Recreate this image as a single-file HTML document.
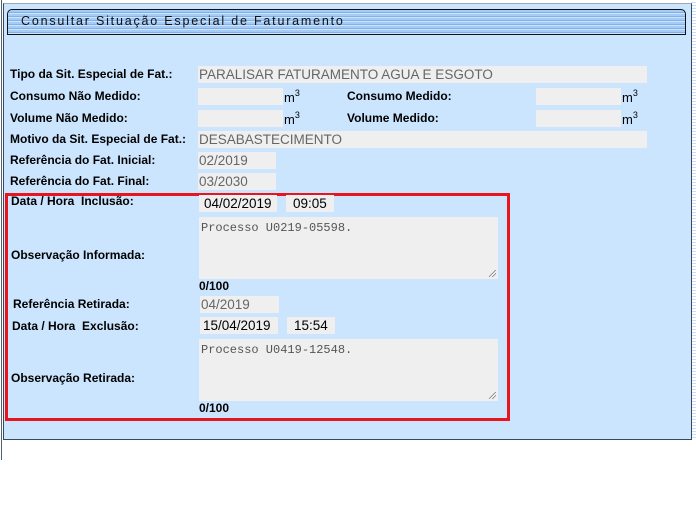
<!DOCTYPE html>
<html><head><meta charset="utf-8"><style>
*{margin:0;padding:0;box-sizing:border-box}
body{width:696px;height:523px;background:#fff;position:relative;overflow:hidden;font-family:"Liberation Sans",Arial,sans-serif}
.stripes{position:absolute;left:691px;top:0;width:5px;height:440px;background:repeating-linear-gradient(#fff 0 2px,#c9defa 2px 3px)}
.edge{position:absolute;left:1px;top:0;width:1px;height:460px;background:#506070}
.panel{position:absolute;left:3px;top:3px;width:689px;height:437px;background:#cce5fe;border:1px solid #3a4a5a;border-top-color:#9ab}
.title{position:absolute;left:7px;top:9px;width:679px;height:26px;border:1px solid #111;border-radius:5px 5px 0 0;background:repeating-linear-gradient(#a6ccf5 0 2px,#7fb2ec 2px 3px,#cfe3fa 3px 4px)}
.title span{position:absolute;left:13px;top:4px;font-size:12.5px;letter-spacing:1.8px;color:#111}
.l{position:absolute;font-size:12px;font-weight:bold;color:#000;white-space:nowrap}
.b{position:absolute;background:#efefef;height:17px;font-size:13.5px;color:#666;padding-left:1px;line-height:17px;white-space:nowrap}
.k{color:#000}
.m{position:absolute;font-size:13px;color:#000}
.m sup{font-size:9px;vertical-align:6px}
.ta{position:absolute;background:#efefef;width:299px;height:62px;font-family:"Liberation Mono",monospace;font-size:12px;color:#555;padding:4px 2px}
.ta:after{content:"";position:absolute;right:2px;bottom:2px;width:7px;height:7px;background:linear-gradient(135deg,transparent 45%,#777 45% 52%,transparent 52% 70%,#777 70% 77%,transparent 77%)}
.red{position:absolute;left:5px;top:193px;width:505px;height:228px;border:3px solid #e8141e}
</style></head><body>
<div class="stripes"></div>
<div class="panel"></div>
<div class="edge"></div>
<div class="title"><span>Consultar Situação Especial de Faturamento</span></div>

<div class="l" style="left:10px;top:67px">Tipo da Sit. Especial de Fat.:</div>
<div class="b" style="left:198px;top:66px;width:449px">PARALISAR FATURAMENTO AGUA E ESGOTO</div>

<div class="l" style="left:10px;top:89px">Consumo Não Medido:</div>
<div class="b" style="left:198px;top:88px;width:85px"></div>
<div class="m" style="left:284px;top:88px">m<sup>3</sup></div>
<div class="l" style="left:347px;top:89px">Consumo Medido:</div>
<div class="b" style="left:536px;top:88px;width:85px"></div>
<div class="m" style="left:622px;top:88px">m<sup>3</sup></div>

<div class="l" style="left:10px;top:111px">Volume Não Medido:</div>
<div class="b" style="left:198px;top:110px;width:85px"></div>
<div class="m" style="left:284px;top:110px">m<sup>3</sup></div>
<div class="l" style="left:347px;top:111px">Volume Medido:</div>
<div class="b" style="left:536px;top:110px;width:85px"></div>
<div class="m" style="left:622px;top:110px">m<sup>3</sup></div>

<div class="l" style="left:10px;top:132px">Motivo da Sit. Especial de Fat.:</div>
<div class="b" style="left:198px;top:131px;width:449px">DESABASTECIMENTO</div>

<div class="l" style="left:10px;top:153px">Referência do Fat. Inicial:</div>
<div class="b" style="left:198px;top:152px;width:78px">02/2019</div>
<div class="l" style="left:10px;top:174px">Referência do Fat. Final:</div>
<div class="b" style="left:198px;top:173px;width:78px">03/2030</div>

<div class="red"></div>
<div class="l" style="left:11px;top:194px">Data / Hora&nbsp; Inclusão:</div>
<div class="b k" style="left:199px;top:195px;width:78px;padding-left:5px">04/02/2019</div>
<div class="b k" style="left:286px;top:195px;width:48px;padding-left:7px">09:05</div>
<div class="ta" style="left:199px;top:217px">Processo U0219-05598.</div>
<div class="l" style="left:11px;top:248px">Observação Informada:</div>
<div class="l" style="left:199px;top:279px">0/100</div>

<div class="l" style="left:13px;top:297px">Referência Retirada:</div>
<div class="b" style="left:200px;top:296px;width:79px">04/2019</div>
<div class="l" style="left:12px;top:319px">Data / Hora&nbsp; Exclusão:</div>
<div class="b k" style="left:200px;top:317px;width:78px;padding-left:3px">15/04/2019</div>
<div class="b k" style="left:287px;top:317px;width:48px;padding-left:7px">15:54</div>
<div class="ta" style="left:199px;top:339px">Processo U0419-12548.</div>
<div class="l" style="left:11px;top:371px">Observação Retirada:</div>
<div class="l" style="left:199px;top:401px">0/100</div>
</body></html>
